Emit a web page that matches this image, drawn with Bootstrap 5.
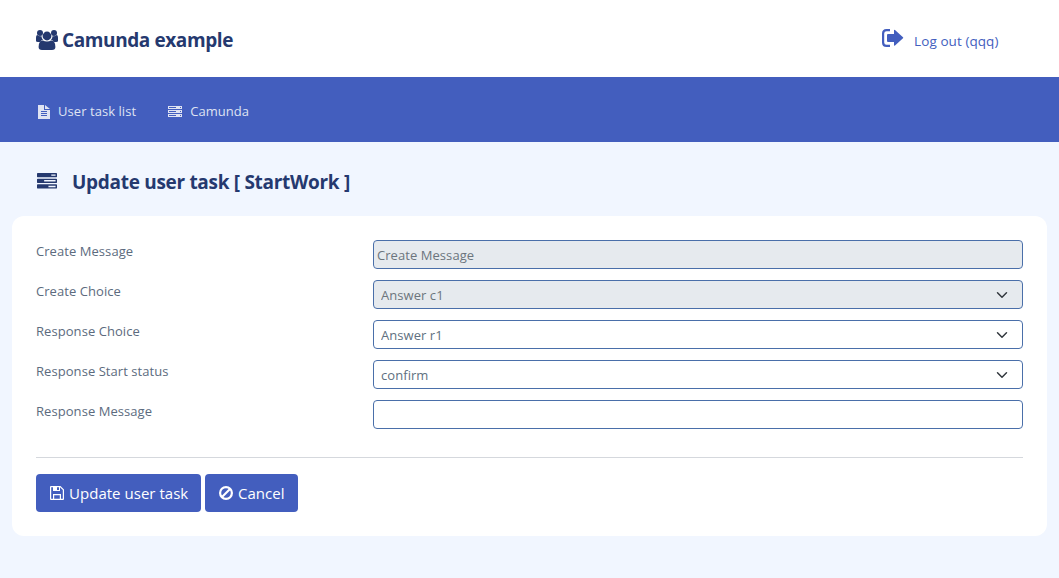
<!DOCTYPE html>
<html lang="en">
<head>
<meta charset="utf-8">
<meta name="viewport" content="width=device-width, initial-scale=1">
<title>Camunda example</title>
<link href="https://cdn.jsdelivr.net/npm/bootstrap@5.3.0/dist/css/bootstrap.min.css" rel="stylesheet">
<style>
body{font-family:"Open Sans","Noto Sans",sans-serif;background:#f1f6ff;color:#5c6b7e;font-size:13px;letter-spacing:.06px;line-height:20px;overflow:hidden}
svg{fill:currentColor;flex:none;display:block}
.top-bar{height:77px;padding:2px 60.5px 0 36px;background:#fff}
.brand-block,.title-row{color:#25396f}
.brand-name,.page-title{font-weight:700;color:#25396f;line-height:26px;white-space:nowrap}
.brand-name{font-size:19px;letter-spacing:-.4px;margin:0 0 0 4px}
.page-title{font-size:19px;letter-spacing:-.3px;margin:0 0 0 15px}
.logout{color:#435ebe;font-size:13.5px;letter-spacing:.07px}
.logout svg{margin-right:10px}
.logout span{padding-top:2px}
.menu-bar{height:65px;background:#435ebe;padding:3px 37px 0}
.menu-bar a{color:#dfe3f2}
.menu-bar svg{margin-top:1px}
.title-row{height:74px;padding:6px 37px 0}
.title-row svg{margin-bottom:2px}
.panel{margin:0 12px;height:320px;border:0;border-radius:12px;padding:24px}
.form-row{height:40px}
.form-row label{width:337px;padding-top:1px}
.field{height:29px;border:1px solid #4a6fa9;border-radius:4px;font-size:13px;letter-spacing:.06px;color:#607080;line-height:20px;padding:1px 3px 0}
.form-select.field{padding:1px 36px 0 7px;background-position:right 12px center;background-size:16px 12px}
.field:disabled{background-color:#e6eaee;color:#6c757d}
.divider{border-top:1px solid #d5d8dd;margin-top:17px;padding-top:16px}
.btn-main{background:#435ebe;color:#fff;font-size:15px;letter-spacing:.03px;line-height:24px;height:38px;border-radius:4px;padding:0 13px 0 14px;border:0;white-space:nowrap}
.btn-main svg{margin-right:5px}
.btn-update{width:165px}
.btn-cancel{width:93px}
</style>
</head>
<body>
<header class="top-bar d-flex justify-content-between align-items-center">
<div class="brand-block d-flex align-items-center">
<svg width="22" height="22" viewBox="0 0 22 22"><circle cx="4" cy="4" r="3"/><circle cx="18" cy="4" r="3"/><circle cx="11" cy="7" r="4.400"/><path d="M0 12V9q0-3 1.500-3 1 1.600 4 1.200Q5.500 9.500 7 11q-2 0-3 2H2q-2 0-2-1zM22 12V9q0-3-1.500-3-1 1.600-4 1.200 0 2.300-1.500 3.800 2 0 3 2h2q2 0 2-1zM2.600 18q0-6.500 4.400-6.500 1.500 1 4 1t4-1q4.400 0 4.400 6.500 0 3-3.400 3H6q-3.400 0-3.400-3z"/></svg>
<h1 class="brand-name">Camunda example</h1></div>
<a class="logout d-flex text-decoration-none" href="#"><svg width="22" height="18" viewBox="0 0 22 18"><path d="M8 0v2.200H4.500Q2.200 2.200 2.200 4.500v9q0 2.300 2.300 2.300H8V18H4.500Q0 18 0 13.500v-9Q0 0 4.500 0zM6 5h6V1.500q0-1.200 1-.5l8 7.300q.5.500 0 1l-8 7.300q-1 .7-1-.5V13H6q-1 0-1-1V6q0-1 1-1z"/></svg><span>Log out (qqq)</span></a>
</header>
<nav class="menu-bar d-flex align-items-center">
<a href="#" class="d-flex align-items-center text-decoration-none me-4"><svg width="13" height="14" viewBox="0 0 13 14" class="me-2"><path fill-rule="evenodd" d="M1 0h6v5h6v9H1zM8 0l5 4H8zM4 6v1h6V6zm0 2v1h6V8zm0 2v1h6v-1z"/></svg>User task list</a>
<a href="#" class="d-flex align-items-center text-decoration-none ms-2"><svg width="14" height="11" viewBox="0 0 14 11" class="me-2"><path fill-rule="evenodd" d="M0 0h14v3H0zM1 1v1h7V1zm11 0v1h1V1zM0 4h14v3H0zm1 1v1h7V5zm11 0v1h1V5zM0 8h14v3H0zm1 1v1h7V9zm11 0v1h1V9z"/></svg>Camunda</a>
</nav>
<main>
<div class="title-row d-flex align-items-center"><svg width="20" height="17" viewBox="0 128 1792 1536" preserveAspectRatio="none"><path d="M1024 1408h640v-128h-640v128zm-384-512h1024v-128h-1024v128zm640-512h384v-128h-384v128zm512 832v256q0 26-19 45t-45 19h-1664q-26 0-45-19t-19-45v-256q0-26 19-45t45-19h1664q26 0 45 19t19 45zm0-512v256q0 26-19 45t-45 19h-1664q-26 0-45-19t-19-45v-256q0-26 19-45t45-19h1664q26 0 45 19t19 45zm0-512v256q0 26-19 45t-45 19h-1664q-26 0-45-19t-19-45v-256q0-26 19-45t45-19h1664q26 0 45 19t19 45z"/></svg><h2 class="page-title">Update user task [ StartWork ]</h2></div>
<form class="card panel">
<div class="form-row d-flex"><label for="m">Create Message</label><input id="m" class="form-control field flex-fill w-auto" value="Create Message" disabled></div>
<div class="form-row d-flex"><label for="c">Create Choice</label><select id="c" class="form-select field flex-fill w-auto" disabled><option>Answer c1</option></select></div>
<div class="form-row d-flex"><label for="r">Response Choice</label><select id="r" class="form-select field flex-fill w-auto"><option>Answer r1</option></select></div>
<div class="form-row d-flex"><label for="s">Response Start status</label><select id="s" class="form-select field flex-fill w-auto"><option>confirm</option></select></div>
<div class="form-row d-flex"><label for="n">Response Message</label><input id="n" class="form-control field flex-fill w-auto"></div>
<div class="divider d-flex gap-1">
<button type="button" class="btn btn-main btn-update d-flex align-items-center"><svg width="14" height="14" viewBox="0 0 14 14"><path fill-rule="evenodd" d="M1 0h9.500L14 3.500V13q0 1-1 1H1q-1 0-1-1V1q0-1 1-1zm.2 1.200v11.600H3V8h8v4.800h1.800V4L10 1.200V5H3V1.200zM7 1.200V4h2V1.200zM4.200 9.200v3.600h5.600V9.200z"/></svg>Update user task</button>
<button type="button" class="btn btn-main btn-cancel d-flex align-items-center"><svg width="14" height="14" viewBox="0 0 14 14" fill="none"><circle cx="7" cy="7" r="5.900" fill="none" stroke="#fff" stroke-width="2.200"/><path d="M3 11l8-8" stroke="#fff" stroke-width="2.200"/></svg>Cancel</button>
</div>
</form>
</main>
<script src="https://cdn.jsdelivr.net/npm/bootstrap@5.3.0/dist/js/bootstrap.bundle.min.js"></script>
</body>
</html>
